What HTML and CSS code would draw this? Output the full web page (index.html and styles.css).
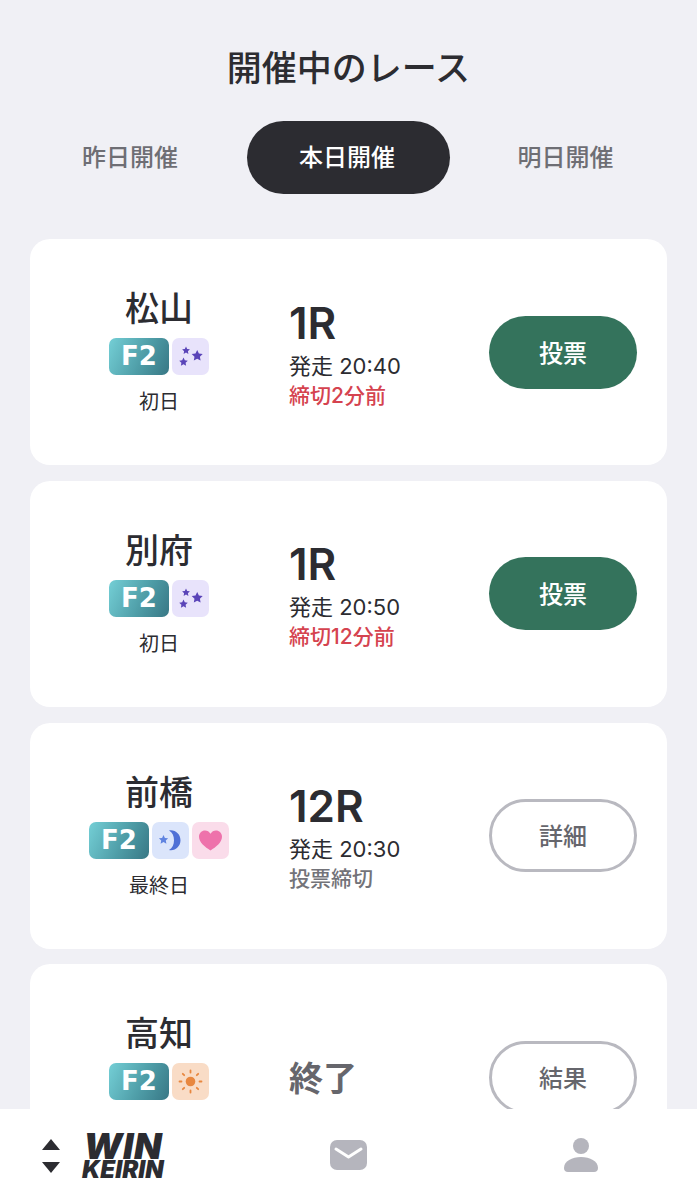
FILE: index.html
```html
<!DOCTYPE html>
<html lang="ja">

<head>
    <meta charset="UTF-8">
    <meta name="viewport" content="width=device-width, initial-scale=1.0">
    <title>開催中のレース</title>
    <link rel="stylesheet" href="styles.css">
</head>

<body>
    <div class="page">
        <h1 class="title">開催中のレース</h1>

        <div class="tabs">
            <div class="tab">昨日開催</div>
            <div class="tab active">本日開催</div>
            <div class="tab">明日開催</div>
        </div>

        <div class="race-list">
            <div class="race-card">
                <div class="venue">
                    <div class="venue-name">松山</div>
                    <div class="badges">
                        <span class="badge-grade">F2</span>
                        <span class="badge badge-night">
                            <svg viewBox="0 0 37 37" width="37" height="37"><path class="star" d="M14 8.500l1.200 2.500 2.700.3-2 1.900.5 2.700-2.400-1.300-2.400 1.300.5-2.700-2-1.900 2.700-.3z"/><path class="star" d="M25.200 12l1.700 3.500 3.800.5-2.800 2.700.7 3.800-3.400-1.800-3.400 1.800.7-3.800-2.800-2.700 3.800-.5z"/><path class="star" d="M11.500 19.500l1.300 2.800 3 .4-2.200 2.100.5 3-2.600-1.500-2.600 1.500.5-3-2.200-2.100 3-.4z"/></svg>
                        </span>
                    </div>
                    <div class="venue-day">初日</div>
                </div>
                <div class="race-info">
                    <div class="race-no">1R</div>
                    <div class="race-time">発走 20:40</div>
                    <div class="race-close urgent">締切2分前</div>
                </div>
                <button class="race-btn vote">投票</button>
            </div>

            <div class="race-card">
                <div class="venue">
                    <div class="venue-name">別府</div>
                    <div class="badges">
                        <span class="badge-grade">F2</span>
                        <span class="badge badge-night">
                            <svg viewBox="0 0 37 37" width="37" height="37"><path class="star" d="M14 8.500l1.200 2.500 2.700.3-2 1.900.5 2.700-2.400-1.300-2.400 1.300.5-2.700-2-1.900 2.700-.3z"/><path class="star" d="M25.200 12l1.700 3.500 3.800.5-2.800 2.700.7 3.800-3.400-1.800-3.400 1.800.7-3.800-2.800-2.700 3.800-.5z"/><path class="star" d="M11.500 19.500l1.300 2.800 3 .4-2.200 2.100.5 3-2.600-1.500-2.600 1.500.5-3-2.200-2.100 3-.4z"/></svg>
                        </span>
                    </div>
                    <div class="venue-day">初日</div>
                </div>
                <div class="race-info">
                    <div class="race-no">1R</div>
                    <div class="race-time">発走 20:50</div>
                    <div class="race-close urgent">締切12分前</div>
                </div>
                <button class="race-btn vote">投票</button>
            </div>

            <div class="race-card">
                <div class="venue">
                    <div class="venue-name">前橋</div>
                    <div class="badges">
                        <span class="badge-grade">F2</span>
                        <span class="badge badge-moon">
                            <svg viewBox="0 0 37 37" width="37" height="37"><path d="M17 8.500c6-1.200 11.500 3.500 11.500 9.800 0 6.300-5.500 11-11.500 9.700 3.500-1.800 5-5.300 5-9.700 0-4.400-1.500-8-5-9.800z" fill="#4f70d6"/><path d="M11.500 13l1.400 2.900 3.200.4-2.300 2.200.6 3.200-2.900-1.600-2.900 1.600.6-3.200-2.300-2.200 3.200-.4z" fill="#5f83e0"/></svg>
                        </span>
                        <span class="badge badge-heart">
                            <svg viewBox="0 0 37 37" width="37" height="37"><path d="M18.500 28.500C13 25 7 20.500 7 14.800 7 11 9.800 8.500 13 8.500c2.300 0 4.300 1.200 5.500 3.300 1.200-2.100 3.200-3.300 5.500-3.300 3.200 0 6 2.500 6 6.300C30 20.500 24 25 18.500 28.500z" fill="#ee72ab"/></svg>
                        </span>
                    </div>
                    <div class="venue-day">最終日</div>
                </div>
                <div class="race-info">
                    <div class="race-no">12R</div>
                    <div class="race-time">発走 20:30</div>
                    <div class="race-close">投票締切</div>
                </div>
                <button class="race-btn outline">詳細</button>
            </div>

            <div class="race-card">
                <div class="venue">
                    <div class="venue-name">高知</div>
                    <div class="badges">
                        <span class="badge-grade">F2</span>
                        <span class="badge badge-sun">
                            <svg viewBox="0 0 37 37" width="37" height="37"><circle cx="18.500" cy="18.500" r="4.800" fill="#e8873f"/><path d="M18.500 7.500v2M18.500 27.500v2M7.500 18.500h2M27.500 18.500h2M10.800 10.800l1.400 1.400M24.800 24.800l1.400 1.400M10.800 26.200l1.400-1.400M24.800 12.200l1.400-1.400" stroke="#e8873f" stroke-width="1.800" stroke-linecap="round"/></svg>
                        </span>
                    </div>
                    <div class="venue-day">初日</div>
                </div>
                <div class="race-info">
                    <div class="race-end">終了</div>
                </div>
                <button class="race-btn outline">結果</button>
            </div>
        </div>
    </div>

    <nav class="bottom-nav">
        <div class="nav-left">
            <svg class="nav-sort" viewBox="0 0 20 36" width="20" height="36"><path d="M10 1l9 11H1z" fill="#2c2c31"/><path d="M1 24h18l-9 11z" fill="#2c2c31"/></svg>
            <div class="logo">
                <div class="logo-win">WIN</div>
                <div class="logo-keirin">KEIRIN</div>
            </div>
        </div>
        <svg class="nav-icon mail" viewBox="0 0 37 30" width="37" height="30"><rect x="0" y="0" width="37" height="30" rx="7" fill="#b5b5bd"/><path d="M6 9l12.500 8L31 9" fill="none" stroke="#fff" stroke-width="3" stroke-linecap="round" stroke-linejoin="round"/></svg>
        <svg class="nav-icon person" viewBox="0 0 34 34" width="34" height="34"><circle cx="17" cy="8" r="8" fill="#b5b5bd"/><path d="M0 30c0-7 8-11 17-11s17 4 17 11c0 2.500-1.500 4-4 4H4c-2.500 0-4-1.500-4-4z" fill="#b5b5bd"/></svg>
    </nav>
</body>

</html>
```

FILE: styles.css
```css
body {
    font-family: Inter, "Noto Sans CJK JP", sans-serif;
    margin: 0;
    padding: 0;
    background-color: #f0f0f5;
    color: #2c2c31;
    height: 1200px;
    overflow: hidden;
    position: relative;
}

.page {
    padding: 0 30px;
}

.title {
    margin: 0;
    padding-top: 44px;
    font-size: 35px;
    line-height: 48px;
    font-weight: 500;
    text-align: center;
}

.tabs {
    display: flex;
    gap: 14px;
    margin-top: 29px;
}

.tab {
    flex: 1;
    height: 73px;
    line-height: 73px;
    border-radius: 37px;
    text-align: center;
    text-indent: -3px;
    font-size: 24px;
    font-weight: 500;
    color: #6e6e74;
}

.tab:last-child {
    text-indent: 0;
}

.tab.active {
    background-color: #2c2c31;
    color: #fff;
}

.race-list {
    display: flex;
    flex-direction: column;
    gap: 15.75px;
    margin-top: 45px;
}

.race-card {
    display: grid;
    grid-template-columns: 258px 1fr auto;
    align-items: center;
    flex: 0 0 226px;
    height: 226px;
    padding-right: 30px;
    background-color: #fff;
    border-radius: 20px;
}

.venue {
    display: flex;
    flex-direction: column;
    align-items: center;
    padding-bottom: 2px;
}

.venue-name {
    font-size: 34px;
    line-height: 46px;
    font-weight: 500;
}

.badges {
    display: flex;
    gap: 3px;
    height: 37px;
    margin-top: 6px;
}

.badge-grade {
    width: 60px;
    height: 37px;
    line-height: 37px;
    border-radius: 7px;
    text-align: center;
    font-family: "DejaVu Sans", sans-serif;
    font-size: 26px;
    font-weight: 700;
    color: #fff;
    background: linear-gradient(115deg, #74cfd6 0%, #4f9ea8 55%, #387785 100%);
}

.badge {
    display: block;
    width: 37px;
    height: 37px;
    border-radius: 7px;
}

.badge svg {
    display: block;
}

.badge-night {
    background-color: #e8e3fb;
}

.badge-moon {
    background-color: #dbe5fb;
}

.badge-heart {
    background-color: #fadcea;
}

.badge-sun {
    background-color: #f9dcc6;
}

.star {
    fill: #5a44b8;
}

.venue-day {
    margin-top: 13px;
    font-size: 20px;
    line-height: 28px;
}

.race-info {
    padding-top: 4px;
    padding-left: 1px;
}

.race-no {
    font-size: 44px;
    line-height: 50px;
    font-weight: 600;
}

.race-time {
    margin-top: 3px;
    font-size: 22px;
    line-height: 30px;
}

.race-close {
    font-size: 21px;
    line-height: 30px;
    font-weight: 500;
    color: #737379;
}

.race-close.urgent {
    color: #d5434f;
}

.race-end {
    font-size: 34px;
    line-height: 48px;
    font-weight: 600;
    color: #66666c;
}

.race-btn {
    box-sizing: border-box;
    width: 148px;
    height: 73px;
    border-radius: 37px;
    font-family: inherit;
    font-size: 24px;
    font-weight: 500;
    padding: 0 0 2px;
}

.race-btn.vote {
    background-color: #34735c;
    border: none;
    color: #fff;
}

.race-btn.outline {
    background-color: #fff;
    border: 3px solid #b9b9c0;
    color: #66666c;
}

.bottom-nav {
    position: absolute;
    left: 0;
    right: 0;
    top: 1109px;
    height: 91px;
    background-color: #fff;
}

.nav-left {
    position: absolute;
    left: 41px;
    top: 23px;
    display: flex;
    align-items: center;
    gap: 21px;
}

.nav-sort {
    display: block;
}

.logo {
    font-weight: 900;
    font-style: italic;
    color: #2c2c31;
    text-align: center;
}

.logo-win {
    font-size: 36px;
    line-height: 28px;
    letter-spacing: 0.5px;
}

.logo-keirin {
    font-size: 24px;
    line-height: 19px;
}

.nav-icon {
    position: absolute;
    display: block;
}

.nav-icon.mail {
    left: 330px;
    top: 31px;
}

.nav-icon.person {
    left: 564px;
    top: 29px;
}
```
